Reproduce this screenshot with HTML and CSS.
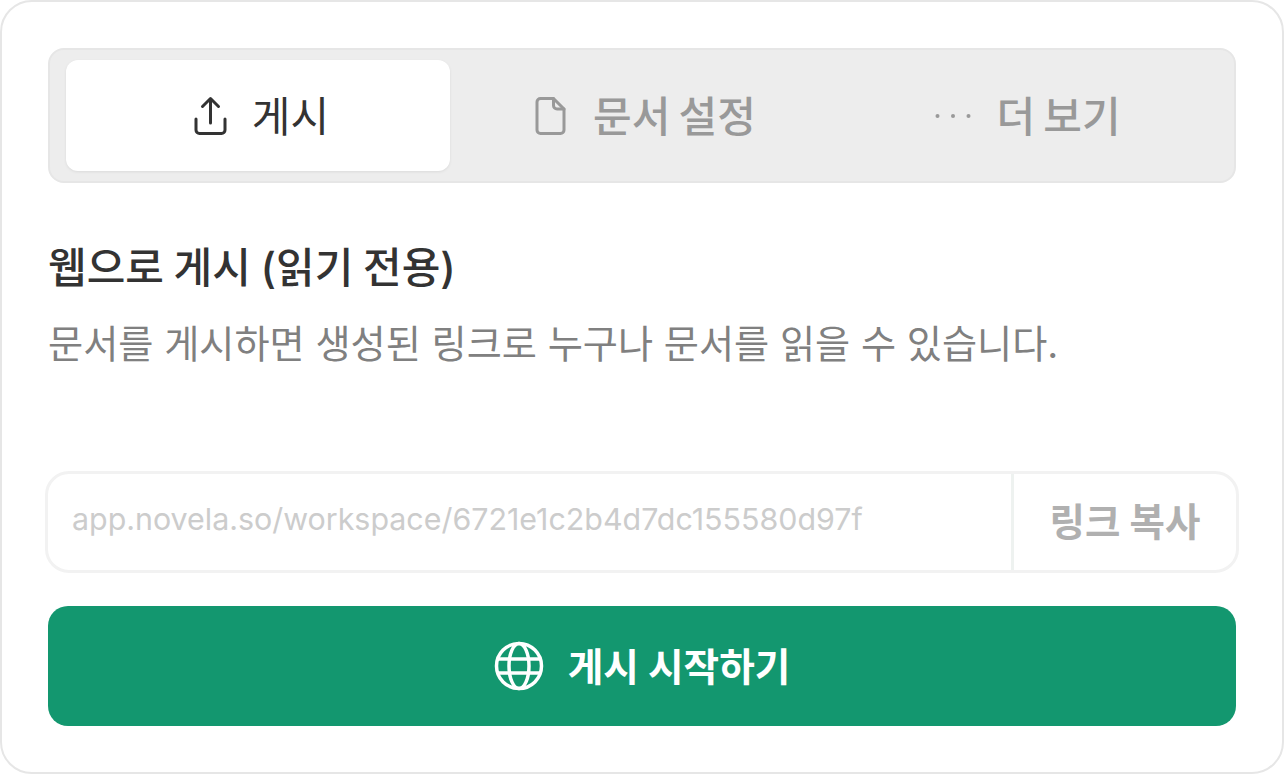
FILE: index.html
```html
<!DOCTYPE html>
<html lang="ko">
  <head>
    <meta charset="utf-8" />
    <link rel="stylesheet" href="styles.css">
  </head>
  <body>
    <main class="panel">
      <nav class="tabs">
        <div class="tab tab-active">
          <svg class="tab-icon" viewBox="-3.500 0 40 40" fill="none" stroke="currentColor" stroke-width="3" stroke-linecap="round" stroke-linejoin="round">
            <path d="M20 27V3M12 10.500 20 2.500 28 10.500"/>
            <path d="M5.500 23v11a3.500 3.500 0 0 0 3.500 3.500h22a3.500 3.500 0 0 0 3.500-3.500V23"/>
          </svg>
          <span>게시</span>
        </div>
        <div class="tab">
          <svg class="tab-icon" viewBox="-2.500 0 40 40" fill="none" stroke="currentColor" stroke-width="3" stroke-linecap="round" stroke-linejoin="round">
            <path d="M23 2.500H10a3.500 3.500 0 0 0-3.500 3.500v28a3.500 3.500 0 0 0 3.500 3.500h20a3.500 3.500 0 0 0 3.500-3.500V13z"/>
            <path d="M23 2.500v7a3.500 3.500 0 0 0 3.500 3.500h7"/>
          </svg>
          <span>문서 설정</span>
        </div>
        <div class="tab">
          <svg class="tab-icon" viewBox="0 0 40 40" fill="currentColor">
            <circle cx="6.500" cy="20" r="2"/><circle cx="22" cy="20" r="2"/><circle cx="37.500" cy="20" r="2"/>
          </svg>
          <span>더 보기</span>
        </div>
      </nav>

      <section class="intro">
        <h1>웹으로 게시 (읽기 전용)</h1>
        <p>문서를 게시하면 생성된 링크로 누구나 문서를 읽을 수 있습니다.</p>
      </section>

      <div class="link-row">
        <div class="link-url"><span>app.novela.so/workspace/6721e1c2b4d7dc155580d97f</span></div>
        <div class="link-copy"><span>링크 복사</span></div>
      </div>

      <div class="publish">
        <svg class="publish-icon" viewBox="0 0 50 50" fill="none" stroke="currentColor" stroke-width="3.500">
          <circle cx="25" cy="25" r="22.500"/>
          <ellipse cx="25" cy="25" rx="10" ry="22.500"/>
          <path d="M4 18h42M4 32h42"/>
        </svg>
        <span>게시 시작하기</span>
      </div>
    </main>
  </body>
</html>
```

FILE: styles.css
```css
* {
  box-sizing: border-box;
}

html, body {
  margin: 0;
  background: #fff;
}

body {
  font-family: Inter, "Noto Sans CJK KR", sans-serif;
}

.panel {
  width: 1284px;
  height: 774px;
  padding: 46px;
  border: 2px solid #e6e6e6;
  border-radius: 32px;
  display: flex;
  flex-direction: column;
  background: #fff;
}

.tabs {
  display: grid;
  grid-template-columns: repeat(3, 1fr);
  height: 135px;
  padding: 10px 16px;
  border: 2px solid #e6e6e6;
  border-radius: 16px;
  background: #ededed;
}

.tab {
  display: flex;
  align-items: center;
  justify-content: center;
  gap: 25px;
  font-size: 42px;
  font-weight: 500;
  word-spacing: -3px;
  color: #999;
}

.tab span {
  line-height: 40px;
  padding-top: 2px;
}

.tab-active {
  background: #fff;
  border-radius: 12px;
  color: #333;
  font-weight: 400;
  box-shadow: 0 1px 3px rgba(0, 0, 0, 0.08);
}

.tab-icon {
  width: 40px;
  height: 40px;
}

.intro {
  margin-top: 50px;
  height: 238px;
}

.intro h1 {
  margin: 0;
  font-size: 42px;
  line-height: 70px;
  font-weight: 500;
  word-spacing: -1.500px;
  color: #333;
}

.intro p {
  margin: 15px 0 0;
  font-size: 38.200px;
  line-height: 52px;
  font-weight: 400;
  color: #808080;
}

.link-row {
  display: flex;
  height: 102px;
  margin: 0 -3px;
  border: 3px solid #f2f2f2;
  border-radius: 24px;
}

.link-url {
  flex: 1;
  display: flex;
  align-items: center;
  padding-left: 24px;
  font-size: 30.400px;
  color: #ccc;
}

.link-copy {
  display: flex;
  align-items: center;
  justify-content: center;
  width: 225px;
  border-left: 3px solid #eef2f0;
  font-size: 38.500px;
  font-weight: 700;
  color: #b0b0b0;
}

.link-url span,
.link-copy span {
  padding-bottom: 6px;
}

.publish {
  display: flex;
  align-items: center;
  justify-content: center;
  gap: 24px;
  height: 120px;
  margin-top: 33px;
  border-radius: 20px;
  background: #13976f;
  color: #fff;
  font-size: 38.700px;
  font-weight: 700;
}

.publish span {
  padding-bottom: 5px;
}

.publish-icon {
  width: 50px;
  height: 50px;
}
```
